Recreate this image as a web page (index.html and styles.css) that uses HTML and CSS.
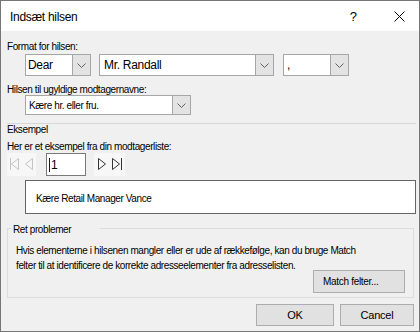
FILE: index.html
```html
<!DOCTYPE html>
<html lang="da">
<head>
    <meta charset="UTF-8">
    <meta name="viewport" content="width=device-width, initial-scale=1.0">
    <title>Indsæt hilsen</title>
    <link rel="stylesheet" href="styles.css">
</head>
<body>
    <div class="dialog">
        <div class="titlebar">
            <span class="title">Indsæt hilsen</span>
            <span class="help">?</span>
            <svg class="close" width="11" height="11" viewBox="0 0 11 11">
                <path d="M0.5 0.5 L10.5 10.5 M10.5 0.5 L0.5 10.5" stroke="#000" stroke-width="1" fill="none"/>
            </svg>
        </div>

        <div class="content">
            <div class="label label-format">Format for hilsen:</div>
            <div class="combo-row">
                <div class="combo combo-dear">
                    <span class="combo-value">Dear</span>
                    <span class="combo-arrow"><svg width="9" height="5" viewBox="0 0 9 5"><polyline points="0.5,0.5 4.5,4.5 8.5,0.5"/></svg></span>
                </div>
                <div class="combo combo-name">
                    <span class="combo-value">Mr. Randall</span>
                    <span class="combo-arrow"><svg width="9" height="5" viewBox="0 0 9 5"><polyline points="0.5,0.5 4.5,4.5 8.5,0.5"/></svg></span>
                </div>
                <div class="combo combo-punct">
                    <span class="combo-value">,</span>
                    <span class="combo-arrow"><svg width="9" height="5" viewBox="0 0 9 5"><polyline points="0.5,0.5 4.5,4.5 8.5,0.5"/></svg></span>
                </div>
            </div>

            <div class="label label-invalid">Hilsen til ugyldige modtagernavne:</div>
            <div class="combo combo-invalid">
                <span class="combo-value">Kære hr. eller fru.</span>
                <span class="combo-arrow"><svg width="9" height="5" viewBox="0 0 9 5"><polyline points="0.5,0.5 4.5,4.5 8.5,0.5"/></svg></span>
            </div>

            <div class="separator"></div>
            <div class="label">Eksempel</div>
            <div class="label label-sample">Her er et eksempel fra din modtagerliste:</div>

            <div class="nav-row">
                <div class="nav-box nav-back">
                    <svg width="29" height="23" viewBox="0 0 29 23">
                        <g stroke="#c4c4c4" fill="none" stroke-width="1">
                            <path d="M3.5 5 L3.5 17"/>
                            <polygon points="11.5,5.5 4.5,11 11.5,16.5"/>
                            <polygon points="25.5,5.5 18.5,11 25.5,16.5"/>
                        </g>
                    </svg>
                </div>
                <div class="record-input"><span class="caret"></span>1</div>
                <div class="nav-box nav-forward">
                    <svg width="31" height="23" viewBox="0 0 31 23">
                        <g stroke="#333" fill="none" stroke-width="1">
                            <polygon points="4.5,5.5 11.5,11 4.5,16.5"/>
                            <polygon points="18.5,5.5 25.5,11 18.5,16.5"/>
                            <path d="M27.5 5 L27.5 17"/>
                        </g>
                    </svg>
                </div>
            </div>

            <div class="preview">Kære Retail Manager Vance</div>

            <div class="group">
                <span class="group-label">Ret problemer</span>
                <p class="group-text">Hvis elementerne i hilsenen mangler eller er ude af rækkefølge, kan du bruge Match<br>felter til at identificere de korrekte adresseelementer fra adresselisten.</p>
                <button class="btn btn-match">Match felter...</button>
            </div>

            <div class="footer">
                <button class="btn btn-ok">OK</button>
                <button class="btn btn-cancel">Cancel</button>
            </div>
        </div>
    </div>
</body>
</html>
```

FILE: styles.css
```css
body {
    margin: 0;
    padding: 0;
    font-family: "Liberation Sans", Arial, sans-serif;
    color: #000;
}

.dialog {
    width: 420px;
    height: 332px;
    box-sizing: border-box;
    border: 1px solid #767676;
    background-color: #f0f0f0;
    overflow: hidden;
}

.titlebar {
    height: 30px;
    background-color: #fff;
    display: flex;
    align-items: center;
    padding-left: 9px;
    font-size: 12px;
}

.title {
    flex: 1;
    letter-spacing: -0.3px;
    padding-top: 1px;
}

.help {
    font-size: 13px;
    margin-right: 37px;
}

.close {
    margin-right: 14px;
}

.content {
    padding: 0 5px 0 6px;
}

.label {
    font-size: 10px;
    line-height: 11px;
    letter-spacing: -0.4px;
}

.label-format {
    margin-top: 10px;
}

.label-invalid {
    margin-top: 8px;
}

.label-sample {
    margin-top: 6px;
}

/* Combo boxes */
.combo-row {
    display: flex;
    margin-top: 2px;
    margin-left: 18px;
}

.combo {
    display: flex;
    box-sizing: border-box;
    height: 22px;
    background-color: #fff;
    border: 1px solid #a6a6a6;
}

.combo-value {
    flex: 1;
    display: flex;
    align-items: center;
    padding-left: 3px;
    font-size: 12px;
    letter-spacing: -0.3px;
    white-space: nowrap;
    overflow: hidden;
}

.combo-arrow {
    width: 17px;
    border-left: 1px solid #a6a6a6;
    background-color: #e3e3e3;
    display: flex;
    align-items: center;
    justify-content: center;
}

.combo-arrow polyline {
    fill: none;
    stroke: #606060;
    stroke-width: 1;
}

.combo-dear {
    width: 66px;
}

.combo-dear .combo-value {
    padding-left: 2px;
}

.combo-name {
    width: 175px;
    margin-left: 8px;
}

.combo-name .combo-value {
    padding-left: 4px;
}

.combo-punct {
    width: 66px;
    margin-left: 9px;
}

.combo-invalid {
    width: 166px;
    height: 20px;
    margin-left: 18px;
}

.combo-invalid .combo-value {
    font-size: 10px;
    letter-spacing: -0.4px;
}

.separator {
    width: 409px;
    height: 1px;
    margin-top: 8px;
    background-color: #d7d7d7;
}

/* Record navigation */
.nav-row {
    display: flex;
    margin-top: 1px;
    height: 23px;
}

.nav-box {
    background-color: #f7f7f7;
}

.nav-back {
    width: 29px;
}

.nav-forward {
    width: 31px;
    margin-left: 8px;
}

.nav-box svg {
    display: block;
}

.record-input {
    width: 40px;
    box-sizing: border-box;
    margin-left: 10px;
    border: 1px solid #7a7a7a;
    background-color: #fff;
    display: flex;
    align-items: center;
    padding-left: 2px;
    font-size: 12px;
}

.caret {
    width: 1px;
    height: 14px;
    background-color: #2a1040;
    margin-right: 1px;
}

.preview {
    width: 391px;
    height: 34px;
    box-sizing: border-box;
    margin-top: 4px;
    margin-left: 18px;
    border: 1px solid #646464;
    background-color: #fff;
    padding: 12px 0 0 10px;
    font-size: 10px;
    line-height: 11px;
    letter-spacing: -0.4px;
}

/* Fix problems group */
.group {
    position: relative;
    width: 407px;
    height: 70px;
    box-sizing: border-box;
    margin-top: 14px;
    border: 1px solid #dcdcdc;
    padding: 14px 8px 4px 8px;
    display: flex;
    flex-direction: column;
}

.group-label {
    position: absolute;
    top: -5px;
    left: 3px;
    width: 87px;
    padding-left: 2px;
    background-color: #f0f0f0;
    font-size: 10px;
    line-height: 11px;
    letter-spacing: -0.4px;
}

.group-text {
    margin: 0;
    font-size: 10px;
    line-height: 15px;
    letter-spacing: -0.4px;
    white-space: nowrap;
}

.btn {
    box-sizing: border-box;
    background-color: #e1e1e1;
    border: 1px solid #adadad;
    font-family: "Liberation Sans", Arial, sans-serif;
    color: #000;
    padding: 0;
    cursor: pointer;
}

.btn-match {
    align-self: flex-end;
    width: 92px;
    height: 23px;
    margin-top: -3px;
    text-align: left;
    padding-left: 9px;
    font-size: 10px;
    letter-spacing: -0.3px;
}

.footer {
    display: flex;
    justify-content: flex-end;
    gap: 6px;
    margin-top: 6px;
}

.btn-ok,
.btn-cancel {
    height: 22px;
    font-size: 11px;
    letter-spacing: -0.2px;
}

.btn-ok {
    width: 78px;
}

.btn-cancel {
    width: 74px;
}
```
